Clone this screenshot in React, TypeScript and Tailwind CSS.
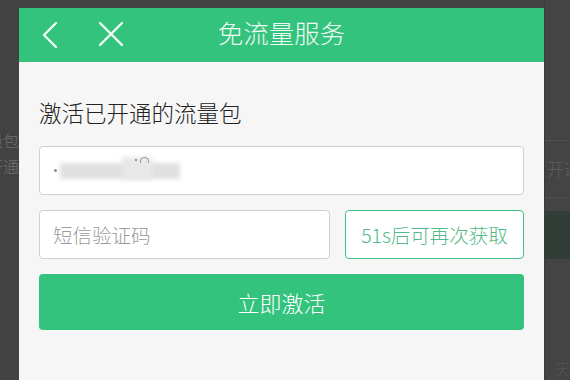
import React from "react";

const font = { fontFamily: '"Noto Sans CJK SC", "Noto Sans", sans-serif' };

export default function App() {
  return (
    <div
      className="w-[570px] h-[380px] bg-[#424242] flex overflow-hidden font-light"
      style={font}
    >
      {/* left dimmed page strip */}
      <div className="w-[19px] shrink-0 overflow-hidden flex flex-col items-end pt-[128px] text-[#6e6e6e] text-[16px] leading-[24px]">
        <div className="whitespace-nowrap">流量包</div>
        <div className="whitespace-nowrap mt-[2px]">已开通</div>
      </div>

      {/* modal */}
      <div className="w-[525px] shrink-0 pt-[8px] flex flex-col">
        <div className="h-[54px] bg-[#33c37d] flex items-center relative">
          <div className="absolute left-[22px] top-[13px]">
            <svg width="18" height="28" viewBox="0 0 18 28">
              <polyline
                points="15,2 3,14 15,26"
                fill="none"
                stroke="#f2fbf6"
                strokeWidth="2.4"
                strokeLinecap="round"
                strokeLinejoin="round"
              />
            </svg>
          </div>
          <div className="absolute left-[78px] top-[12px]">
            <svg width="28" height="28" viewBox="0 0 28 28">
              <path
                d="M3 3 L25 25 M25 3 L3 25"
                fill="none"
                stroke="#f2fbf6"
                strokeWidth="2.4"
                strokeLinecap="round"
              />
            </svg>
          </div>
          <div className="flex-1 text-center text-[25.5px] text-[#effaf4] leading-[48px] pb-[6px]">
            免流量服务
          </div>
        </div>
        <div className="flex-1 bg-[#f6f6f6] px-[20px] pt-[34px] flex flex-col">
          <div className="h-[32px] leading-[32px] text-[22.5px] text-[#222222]">
            激活已开通的流量包
          </div>
          <div className="mt-[18px] h-[49px] bg-white border border-[#cfcfcf] rounded-[4px] flex items-center pl-[14px]">
            <div className="w-[3px] h-[3px] rounded-full bg-[#888] mr-[3px]" />
            <div className="relative w-[120px] h-[16px]">
              <div className="absolute inset-0 bg-[#e0e0e0] blur-[2px] rounded-[2px]" />
              <div className="absolute left-[62px] top-[-6px] w-[30px] h-[22px] bg-[#e8e8e8] blur-[2px]" />
              <div className="absolute left-[75px] top-[-4px] w-[2px] h-[2px] rounded-full bg-[#777]" />
              <div className="absolute left-[80px] top-[-6px] w-[9px] h-[6px] border-t border-l border-r border-[#999] rounded-t-full" />
            </div>
          </div>
          <div className="mt-[15px] flex gap-[15px]">
            <div className="w-[291px] h-[49px] bg-white border border-[#cfcfcf] rounded-[4px] flex items-center pl-[13px] text-[19.5px] text-[#9a9a9a]">
              短信验证码
            </div>
            <div className="flex-1 h-[49px] bg-white border-[1.5px] border-[#43c184] rounded-[4px] flex items-center justify-center text-[19.5px] text-[#52ba88]">
              51s后可再次获取
            </div>
          </div>
          <div className="mt-[15px] h-[56px] bg-[#33c37d] rounded-[4px] flex items-center justify-center text-[22px] text-white">
            立即激活
          </div>
        </div>
      </div>

      {/* right dimmed page strip */}
      <div className="w-[26px] shrink-0 bg-[#444444] border-l border-[#3a3a3a] overflow-hidden flex flex-col pt-[140px]">
        <div className="h-px bg-[#4f4f4f]" />
        <div className="h-[56px] flex items-center text-[17px] text-[#5e5e5e] whitespace-nowrap pl-[2px]">
          开通
        </div>
        <div className="h-px bg-[#4f4f4f]" />
        <div className="mt-[13px] h-[48px] bg-[#333d38]" />
        <div className="flex-1" />
        <div className="h-[22px] text-[15px] text-[#555555] whitespace-nowrap pl-[10px]">
          天
        </div>
      </div>
    </div>
  );
}
